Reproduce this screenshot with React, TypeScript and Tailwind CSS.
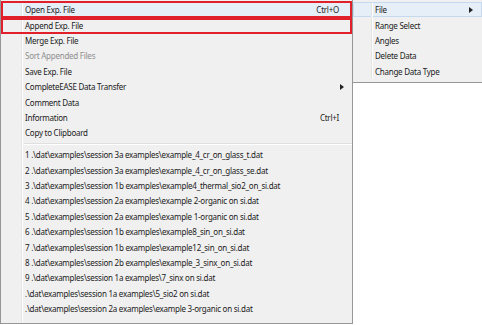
import React from 'react';

type Item = { label: string; shortcut?: string; arrow?: boolean; disabled?: boolean; hot?: boolean };

const topItems: Item[] = [
  { label: 'Open Exp. File', shortcut: 'Ctrl+O', hot: true },
  { label: 'Append Exp. File' },
  { label: 'Merge Exp. File' },
  { label: 'Sort Appended Files', disabled: true },
  { label: 'Save Exp. File' },
  { label: 'CompleteEASE Data Transfer', arrow: true },
  { label: 'Comment Data' },
  { label: 'Information', shortcut: 'Ctrl+I' },
  { label: 'Copy to Clipboard' },
];

const recent = [
  '1 .\\dat\\examples\\session 3a examples\\example_4_cr_on_glass_t.dat',
  '2 .\\dat\\examples\\session 3a examples\\example_4_cr_on_glass_se.dat',
  '3 .\\dat\\examples\\session 1b examples\\example4_thermal_sio2_on_si.dat',
  '4 .\\dat\\examples\\session 2a examples\\example 2-organic on si.dat',
  '5 .\\dat\\examples\\session 2a examples\\example 1-organic on si.dat',
  '6 .\\dat\\examples\\session 1b examples\\example8_sin_on_si.dat',
  '7 .\\dat\\examples\\session 1b examples\\example12_sin_on_si.dat',
  '8 .\\dat\\examples\\session 2b examples\\example_3_sinx_on_si.dat',
  '9 .\\dat\\examples\\session 1a examples\\7_sinx on si.dat',
  '.\\dat\\examples\\session 1a examples\\5_sio2 on si.dat',
  '.\\dat\\examples\\session 2a examples\\example 3-organic on si.dat',
];

const subItems = ['File', 'Range Select', 'Angles', 'Delete Data', 'Change Data Type'];

const Arrow = () => (
  <svg width="4" height="6" viewBox="0 0 4 6" className="shrink-0">
    <path d="M0 0 L4 3 L0 6 Z" fill="#222" />
  </svg>
);

const Row = ({ item }: { item: Item }) => (
  <div
    className={`relative flex items-center h-[15.4px] pt-[1px] ${
      item.hot ? 'bg-[#e6eef8] shadow-[inset_0_0_0_1px_#c5d9f1]' : ''
    }`}
  >
    <div className="w-[21px] h-full border-r border-[#e2e3e3] shadow-[1px_0_0_#fff] shrink-0" />
    <span className={`pl-[3px] flex-1 ${item.disabled ? 'text-[#8f8f8f]' : 'text-[#1b1b1b]'}`}>{item.label}</span>
    {item.shortcut && <span className="pr-[13px] text-[#1b1b1b]">{item.shortcut}</span>}
    {item.arrow && (
      <span className="pr-[8px]">
        <Arrow />
      </span>
    )}
  </div>
);

const App = () => {
  return (
    <div
      className="w-[482px] h-[325px] bg-white flex items-start overflow-hidden text-[8px] tracking-[-0.25px] leading-none"
      style={{ fontFamily: '"Noto Sans", "DejaVu Sans", sans-serif' }}
    >
      {/* main menu */}
      <div className="relative w-[353px] h-[324px] bg-[#f0f0f0] border-l border-r border-b border-[#979797] pt-[2px]">
        {topItems.map((it) => (
          <Row key={it.label} item={it} />
        ))}
        <div className="flex h-[6.5px]">
          <div className="w-[21px] h-full border-r border-[#e2e3e3] shadow-[1px_0_0_#fff]" />
          <div className="flex-1 ml-[2px] mt-[2px] h-[1px] bg-[#e0e0e0] shadow-[0_1px_0_#fff]" />
        </div>
        {recent.map((r) => (
          <Row key={r} item={{ label: r }} />
        ))}
        <div className="flex h-[6px]">
          <div className="w-[21px] h-full border-r border-[#e2e3e3] shadow-[1px_0_0_#fff]" />
        </div>

        {/* red annotation boxes */}
        <div className="absolute left-0 top-[1px] w-[351px] h-[17px] border-2 border-[#e0202a]" />
        <div className="absolute left-0 top-[18px] w-[351px] h-[16px] border-2 border-[#e0202a]" />
      </div>

      {/* submenu */}
      <div className="flex-1 h-[83px] bg-[#f0f0f0] border-b border-[#979797] pt-[2px]">
        {subItems.map((s, i) => (
          <div
            key={s}
            className={`flex items-center h-[15.4px] pt-[1px] ${
              i === 0 ? 'bg-[#e6eef8] shadow-[inset_0_0_0_1px_#c5d9f1]' : ''
            }`}
          >
            <div className="w-[19px] h-full border-r border-[#e2e3e3] shadow-[1px_0_0_#fff] shrink-0" />
            <span className="pl-[3px] flex-1 text-[#1b1b1b]">{s}</span>
            {i === 0 && (
              <span className="pr-[9px]">
                <Arrow />
              </span>
            )}
          </div>
        ))}
      </div>
    </div>
  );
};

export default App;
